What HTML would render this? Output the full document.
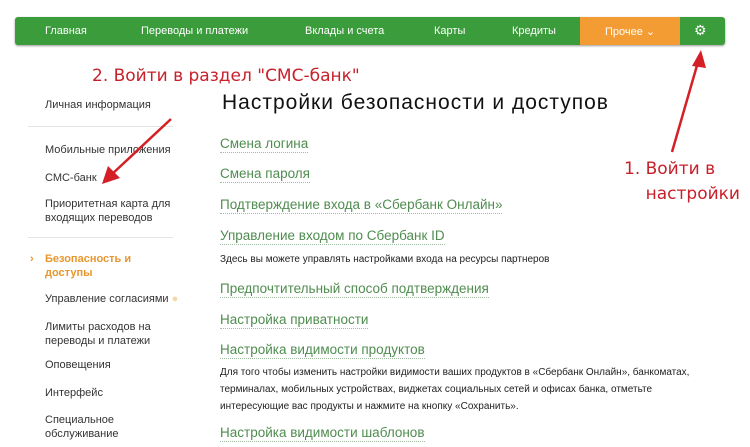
<!DOCTYPE html>
<html><head><meta charset="utf-8"><style>
body{margin:0;width:750px;height:447px;background:#fff;position:relative;overflow:hidden;font-family:"Liberation Sans",sans-serif}
.a{position:absolute;white-space:nowrap}
.nav{position:absolute;left:15px;top:17px;width:710px;height:28px;background:#3b9c3b;border-radius:3px;box-shadow:0 1px 2px #999}
.nav .a{color:#fff;font-size:11px;top:8px}
.l{font-size:11px;color:#333;line-height:14px}
.g{font-size:13.5px;color:#4f8c4f;border-bottom:1px dotted #9ebc9e;padding-bottom:1px}
.t{font-size:10px;color:#222;line-height:17px}
.r{color:#c8202a;font-family:"DejaVu Sans",sans-serif;font-size:16px}
</style></head><body>
<div class="nav">
<div class="a" style="left:30px">Главная</div>
<div class="a" style="left:126px">Переводы и платежи</div>
<div class="a" style="left:290px">Вклады и счета</div>
<div class="a" style="left:419px">Карты</div>
<div class="a" style="left:497px">Кредиты</div>
<div style="position:absolute;left:565px;top:0;width:100px;height:28px;background:#f39c33"></div>
<div class="a" style="left:590px">Прочее ⌄</div>
<div class="a" style="left:679px;top:5px;font-size:14px">⚙</div>
</div>
<div class="a r" style="left:92px;top:66px;font-size:17px">2. Войти в раздел "СМС-банк"</div>
<div class="a r" style="left:624px;top:157px;line-height:25px;font-size:17px">1. Войти в<br>&nbsp;&nbsp;&nbsp;&nbsp;настройки</div>
<div class="a" style="left:222px;top:91px;font-size:21px;letter-spacing:1px;color:#111">Настройки безопасности и доступов</div>
<div class="a l" style="left:45px;top:98px">Личная информация</div>
<div style="position:absolute;left:28px;top:126px;width:145px;height:1px;background:#e4e4e4"></div>
<div class="a l" style="left:45px;top:143px">Мобильные приложения</div>
<div class="a l" style="left:45px;top:171px">СМС-банк</div>
<div class="a l" style="left:45px;top:197px">Приоритетная карта для<br>входящих переводов</div>
<div style="position:absolute;left:28px;top:237px;width:145px;height:1px;background:#e4e4e4"></div>
<div class="a l" style="left:30px;top:252px;color:#e8962e;font-weight:bold">›</div>
<div class="a l" style="left:45px;top:252px;color:#e8962e;font-weight:bold">Безопасность и<br>доступы</div>
<div class="a l" style="left:45px;top:292px">Управление согласиями <span style="color:#f3d9a8">●</span></div>
<div class="a l" style="left:45px;top:320px">Лимиты расходов на<br>переводы и платежи</div>
<div class="a l" style="left:45px;top:358px">Оповещения</div>
<div class="a l" style="left:45px;top:386px">Интерфейс</div>
<div class="a l" style="left:45px;top:413px">Специальное<br>обслуживание</div>
<div class="a g" style="left:220px;top:136px">Смена логина</div>
<div class="a g" style="left:220px;top:166px">Смена пароля</div>
<div class="a g" style="left:220px;top:197px">Подтверждение входа в «Сбербанк Онлайн»</div>
<div class="a g" style="left:220px;top:228px">Управление входом по Сбербанк ID</div>
<div class="a t" style="left:220px;top:251px">Здесь вы можете управлять настройками входа на ресурсы партнеров</div>
<div class="a g" style="left:220px;top:281px">Предпочтительный способ подтверждения</div>
<div class="a g" style="left:220px;top:312px">Настройка приватности</div>
<div class="a g" style="left:220px;top:342px">Настройка видимости продуктов</div>
<div class="a t" style="left:220px;top:364px">Для того чтобы изменить настройки видимости ваших продуктов в «Сбербанк Онлайн», банкоматах,<br>терминалах, мобильных устройствах, виджетах социальных сетей и офисах банка, отметьте<br>интересующие вас продукты и нажмите на кнопку «Сохранить».</div>
<div class="a g" style="left:220px;top:425px">Настройка видимости шаблонов</div>
<svg width="750" height="447" style="position:absolute;left:0;top:0" fill="#d41f26" stroke="#d41f26">
<line x1="171" y1="119" x2="110" y2="176" stroke-width="2.5"/>
<polygon points="102,184 108,166 120,178" stroke="none"/>
<line x1="672" y1="152" x2="698" y2="62" stroke-width="2.5"/>
<polygon points="701,50 692,66 706,68" stroke="none"/>
</svg>
</body></html>
